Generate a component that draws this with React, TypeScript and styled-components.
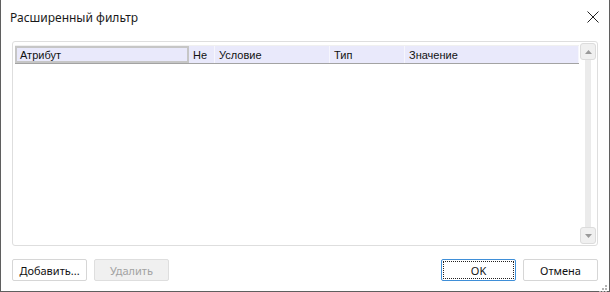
import React from "react";
import styled, { createGlobalStyle } from "styled-components";

const GlobalStyle = createGlobalStyle`
  html, body {
    margin: 0;
    padding: 0;
    background: #ffffff;
  }
  * {
    box-sizing: border-box;
  }
`;

export const Window = styled.div`
  position: relative;
  width: 610px;
  height: 292px;
  background: #ffffff;
  border: 1px solid #5f5f5f;
  border-top: none;
  display: flex;
  flex-direction: column;
  font-family: "Liberation Sans", Arial, sans-serif;
  color: #000;
`;

export const TitleBar = styled.div`
  height: 34px;
  display: flex;
  align-items: center;
  justify-content: space-between;
  padding: 0 8px 0 9px;
`;

export const Title = styled.div`
  font-family: "Noto Sans", "Liberation Sans", sans-serif;
  font-size: 12px;
  color: #1a1a1a;
`;

export const CloseButton = styled.div`
  width: 16px;
  height: 16px;
  display: flex;
  align-items: center;
  justify-content: center;
`;

export const Body = styled.div`
  padding: 7px 11px 0 11px;
`;

export const GridPanel = styled.div`
  height: 205px;
  border: 1px solid #dedede;
  border-radius: 3px;
  display: flex;
  padding: 1px 1px 1px 2px;
`;

export const GridArea = styled.div`
  flex: 1;
  display: flex;
  flex-direction: column;
  padding-top: 2px;
`;

export const HeaderRow = styled.div`
  display: flex;
  height: 19px;
  background: #e9e9fb;
  border-bottom: 1px solid #a3a3a3;
  border-top: 1px solid #f0f0f0;
`;

export const HeaderCell = styled.div<{ $w: number; $selected?: boolean }>`
  width: ${(p) => p.$w}px;
  flex: ${(p) => (p.$w ? "none" : "1")};
  display: flex;
  align-items: center;
  padding-left: ${(p) => (p.$selected ? "3px" : "4px")};
  font-size: 11px;
  color: #111;
  border-right: 1px solid #f6f6fd;
  ${(p) => (p.$selected ? "border: 2px solid #c6c6c6; background: #e9e9fb;" : "")}
`;

export const ScrollBar = styled.div`
  width: 16px;
  margin-left: 1px;
  display: flex;
  flex-direction: column;
  align-items: center;
`;

export const ScrollButton = styled.div`
  width: 16px;
  height: 17px;
  background: #f0f0f0;
  border: 1px solid #dcdcdc;
  border-radius: 3px;
  display: flex;
  align-items: center;
  justify-content: center;
`;

export const ScrollTrack = styled.div`
  flex: 1;
  width: 6px;
  background: #ebebeb;
`;

export const Footer = styled.div`
  display: flex;
  align-items: center;
  padding: 13px 11px 0 11px;
  gap: 7px;
`;

export const Spacer = styled.div`
  flex: 1;
`;

export const Button = styled.div<{ $disabled?: boolean; $focused?: boolean }>`
  width: 75px;
  height: 22px;
  border-radius: 2px;
  display: flex;
  align-items: center;
  justify-content: center;
  font-family: "Noto Sans", "Liberation Sans", sans-serif;
  font-size: 11px;
  color: ${(p) => (p.$disabled ? "#a2a2a2" : "#111")};
  background: ${(p) => (p.$disabled ? "#f0f0f0" : "#ffffff")};
  border: 1px solid ${(p) => (p.$focused ? "#3f8fd8" : p.$disabled ? "#dedede" : "#d6d6d6")};
  position: relative;
  ${(p) =>
    p.$focused
      ? `&::after {
      content: "";
      position: absolute;
      inset: 1px;
      border: 1px dotted #222;
    }`
      : ""}
`;

export const Grip = styled.div`
  position: absolute;
  right: 2px;
  bottom: 2px;
  width: 10px;
  height: 10px;
`;

const columns = [
  { name: "Атрибут", w: 174, selected: true },
  { name: "Не", w: 26 },
  { name: "Условие", w: 115 },
  { name: "Тип", w: 75 },
  { name: "Значение", w: 0 },
];

const Arrow = ({ up }: { up?: boolean }) => (
  <svg width="7" height="4" viewBox="0 0 7 4">
    <polygon points={up ? "3.5,0 7,4 0,4" : "0,0 7,0 3.5,4"} fill="#9a9a9a" />
  </svg>
);

export default function App() {
  return (
    <>
      <GlobalStyle />
      <Window>
        <TitleBar>
          <Title>Расширенный фильтр</Title>
          <CloseButton>
            <svg width="12" height="12" viewBox="0 0 12 12">
              <path d="M0.5 0.5 L11.5 11.5 M11.5 0.5 L0.5 11.5" stroke="#222" strokeWidth="1" />
            </svg>
          </CloseButton>
        </TitleBar>
        <Body>
          <GridPanel>
            <GridArea>
              <HeaderRow>
                {columns.map((c) => (
                  <HeaderCell key={c.name} $w={c.w} $selected={c.selected}>
                    {c.name}
                  </HeaderCell>
                ))}
              </HeaderRow>
            </GridArea>
            <ScrollBar>
              <ScrollButton>
                <Arrow up />
              </ScrollButton>
              <ScrollTrack />
              <ScrollButton>
                <Arrow />
              </ScrollButton>
            </ScrollBar>
          </GridPanel>
        </Body>
        <Footer>
          <Button>Добавить...</Button>
          <Button $disabled>Удалить</Button>
          <Spacer />
          <Button $focused>OK</Button>
          <Button>Отмена</Button>
        </Footer>
        <Grip>
          <svg width="10" height="10" viewBox="0 0 10 10">
            {[
              [8, 0], [8, 3], [5, 3], [8, 6], [5, 6], [2, 6],
            ].map(([x, y], i) => (
              <rect key={i} x={x} y={y + 2} width="2" height="2" fill="#b4b4b4" />
            ))}
          </svg>
        </Grip>
      </Window>
    </>
  );
}
